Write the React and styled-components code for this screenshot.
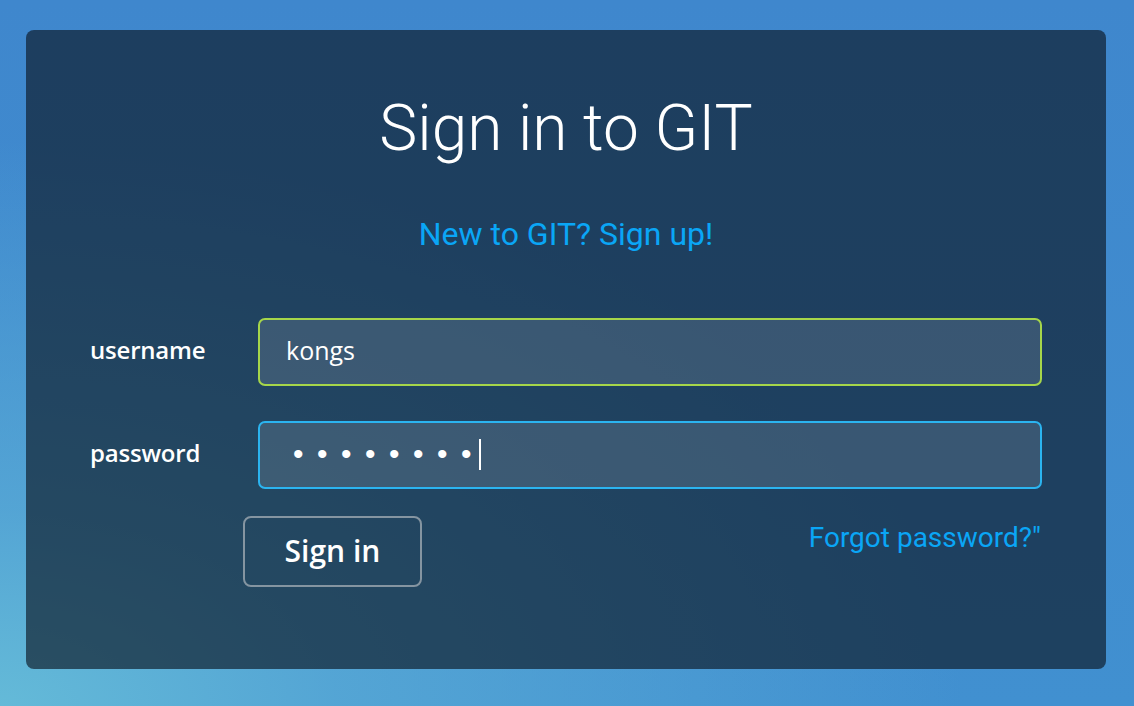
import React from "react";
import styled, { createGlobalStyle } from "styled-components";

const Global = createGlobalStyle`
  html, body { margin: 0; padding: 0; height: 100%; }
  body {
    font-family: "Open Sans", "Liberation Sans", sans-serif;
    background: #3f86cc;
  }
  #root { height: 100%; }
`;

const Page = styled.div`
  box-sizing: border-box;
  height: 100vh;
  display: flex;
  padding: 30px 28px 37px 26px;
  background:
    radial-gradient(ellipse 85% 80% at 0% 100%, rgba(100, 186, 216, 1) 0%, rgba(90, 172, 214, 0.75) 35%, rgba(63, 134, 204, 0) 100%),
    linear-gradient(180deg, #3f87cd 0%, #4190d0 100%);
`;

const Card = styled.main`
  flex: 1;
  display: flex;
  flex-direction: column;
  align-items: stretch;
  box-sizing: border-box;
  padding: 67px 64px 0 64px;
  border-radius: 8px;
  background: rgba(12, 24, 38, 0.66);
`;

const Title = styled.h1`
  margin: 0;
  text-align: center;
  font-family: Roboto, "Liberation Sans", sans-serif;
  font-weight: 300;
  font-size: 64px;
  line-height: 64px;
  color: #ffffff;
`;

const Link = styled.a`
  font-family: Roboto, "Liberation Sans", sans-serif;
  font-weight: 400;
  font-size: ${(p) => p.$size}px;
  color: #0aa6f6;
  text-decoration: none;
  cursor: pointer;
`;

const SignUp = styled.div`
  margin-top: 58px;
  text-align: center;
  line-height: 30px;
`;

const Form = styled.form`
  margin-top: 64px;
  display: grid;
  grid-template-columns: 168px 1fr;
  row-gap: 35px;
  align-items: center;
`;

const Label = styled.label`
  font-family: "Open Sans", "Liberation Sans", sans-serif;
  font-weight: 600;
  font-size: 24px;
  color: #ffffff;
  letter-spacing: -0.2px;
  margin-top: -6px;
`;

const Field = styled.div`
  box-sizing: border-box;
  height: 68px;
  display: flex;
  align-items: center;
  padding: 0 26px 5px;
  border: 2px solid ${(p) => p.$accent};
  border-radius: 7px;
  background: rgba(255, 255, 255, 0.12);
  color: #ffffff;
  font-family: "Open Sans", "Liberation Sans", sans-serif;
  font-size: 25px;
`;

const Dots = styled.span`
  font-family: "Liberation Sans", sans-serif;
  font-size: 30px;
  letter-spacing: 13.5px;
  margin-left: 7px;
  margin-right: -6px;
  line-height: 1;
  margin-top: 3px;
`;

const Caret = styled.span`
  display: inline-block;
  width: 2px;
  height: 31px;
  margin-top: 3px;
  background: #ffffff;
`;

const Actions = styled.div`
  grid-column: 1 / -1;
  margin-top: -8px;
  padding-left: 153px;
  display: flex;
  align-items: center;
  justify-content: space-between;
`;

const Button = styled.button`
  box-sizing: border-box;
  width: 179px;
  height: 71px;
  border: 2px solid #8595a1;
  border-radius: 8px;
  background: transparent;
  color: #ffffff;
  font-family: "Open Sans", "Liberation Sans", sans-serif;
  font-weight: 600;
  font-size: 30px;
  padding: 0 0 3px;
  cursor: pointer;
`;

const Forgot = styled.div`
  margin-right: 1px;
  margin-bottom: 25px;
  line-height: 28px;
`;

export default function App() {
  return (
    <>
      <Global />
      <Page>
        <Card>
          <Title>Sign in to GIT</Title>
          <SignUp>
            <Link $size={32}>New to GIT? Sign up!</Link>
          </SignUp>
          <Form onSubmit={(e) => e.preventDefault()}>
            <Label>username</Label>
            <Field $accent="#a6d64a">kongs</Field>
            <Label>password</Label>
            <Field $accent="#2bb4f0">
              <Dots>••••••••</Dots>
              <Caret />
            </Field>
            <Actions>
              <Button type="submit">Sign in</Button>
              <Forgot>
                <Link $size={28}>Forgot password?"</Link>
              </Forgot>
            </Actions>
          </Form>
        </Card>
      </Page>
    </>
  );
}
